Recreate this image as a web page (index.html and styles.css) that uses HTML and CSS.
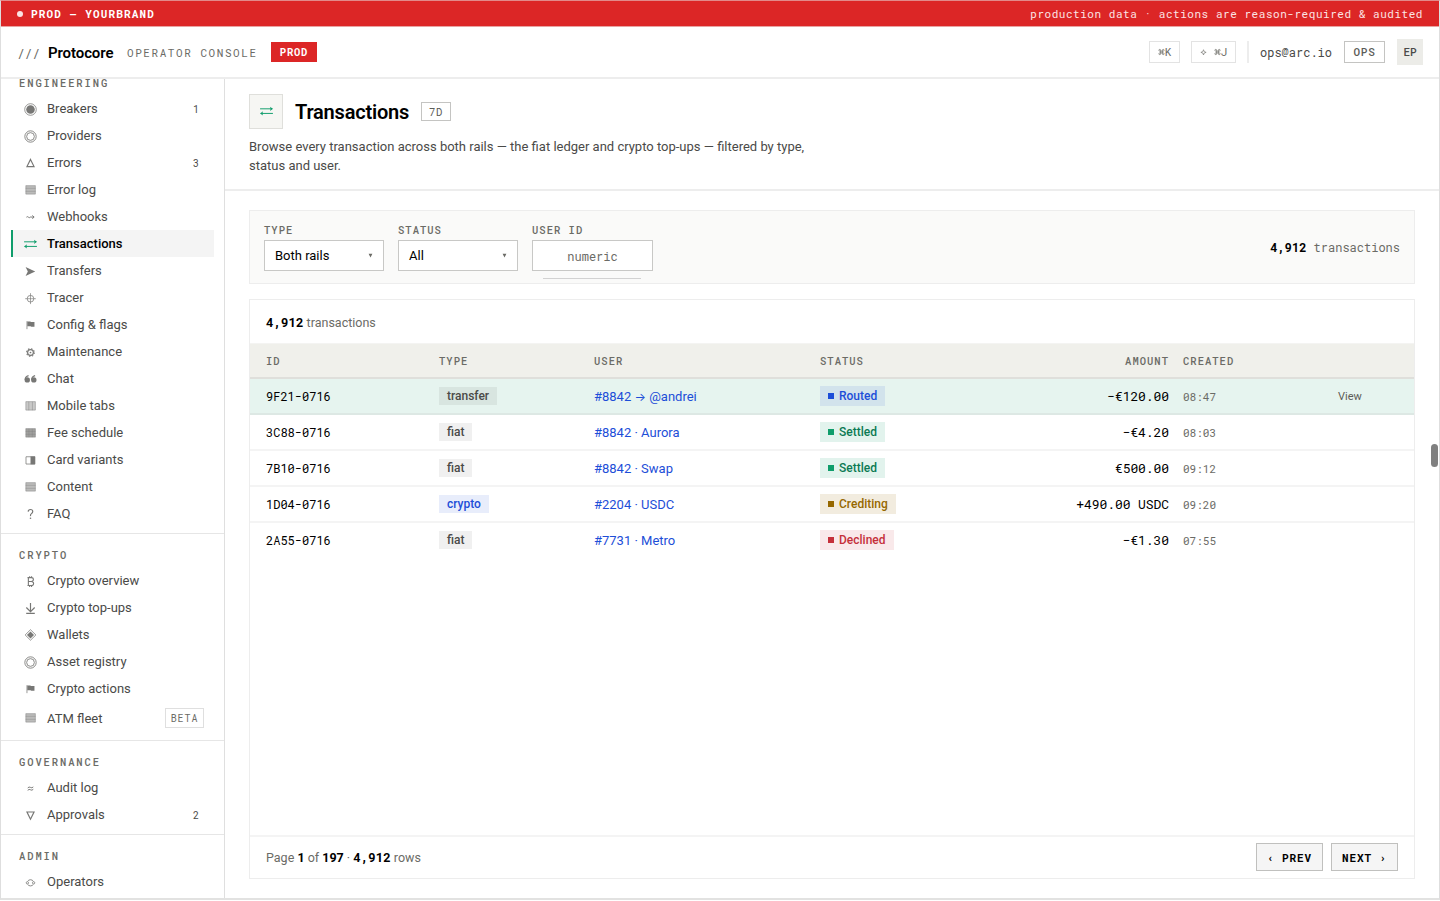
FILE: index.html
```html
<!DOCTYPE html>
<html lang="en">
<head>
<meta charset="utf-8">
<title>Protocore – Transactions</title>
<link rel="stylesheet" href="styles.css">
</head>
<body>
<svg class="sprite" aria-hidden="true">
  <symbol id="i-breakers" viewBox="0 0 14 14"><circle cx="7" cy="7" r="5.4" fill="none" stroke="currentColor" stroke-width=".7"/><circle cx="7" cy="7" r="4" fill="currentColor"/></symbol>
  <symbol id="i-ring" viewBox="0 0 14 14"><g fill="none" stroke="currentColor" stroke-width=".8"><circle cx="7" cy="7" r="5.3"/><circle cx="7" cy="7" r="3.6"/></g></symbol>
  <symbol id="i-up" viewBox="0 0 14 14"><path d="M7 3.2 10.3 9.9H3.7Z" fill="none" stroke="currentColor" stroke-width="1.1"/></symbol>
  <symbol id="i-down" viewBox="0 0 14 14"><path d="M7 10.4 3.7 3.7H10.3Z" fill="none" stroke="currentColor" stroke-width="1.1"/></symbol>
  <symbol id="i-rows" viewBox="0 0 14 14"><path d="M2.4 2.2h9.4v8.4H2.4Z" fill="currentColor" opacity=".5"/><path d="M2.7 2.5h8.8v7.8H2.7ZM2.4 5h9.4M2.4 7.8h9.4" fill="none" stroke="currentColor" stroke-width=".6" opacity=".5"/></symbol>
  <symbol id="i-cols" viewBox="0 0 14 14"><path d="M2.4 2.2h9.4v8.4H2.4Z" fill="currentColor" opacity=".4"/><path d="M2.7 2.5h8.8v7.8H2.7ZM5.4 2.5v8M8.8 2.5v8" fill="none" stroke="currentColor" stroke-width=".7" opacity=".5"/></symbol>
  <symbol id="i-grid" viewBox="0 0 14 14"><path d="M2.4 2.2h9.4v8.4H2.4Z" fill="currentColor" opacity=".7"/><path d="M2.7 2.5h8.8v7.8H2.7ZM5.5 2.5v8M8.7 2.5v8M2.4 5.1h9.4M2.4 7.8h9.4" fill="none" stroke="currentColor" stroke-width=".6" opacity=".4"/></symbol>
  <symbol id="i-half" viewBox="0 0 14 14"><path d="M2.8 3.5h8.2v6.8H2.8Z" fill="none" stroke="currentColor" stroke-width=".7"/><path d="M7 3.2h4.3v7.4H7Z" fill="currentColor"/></symbol>
  <symbol id="i-wave" viewBox="0 0 14 14"><path d="M3.2 6.7q.9-1 1.8 0t1.8-.1H10.2M8.7 5.1 10.4 6.6 8.7 8.1" fill="none" stroke="currentColor" stroke-width=".9"/></symbol>
  <symbol id="i-swap" viewBox="0 0 14 14"><path d="M1 4.5h11.4M1.6 8.8h11.4" fill="none" stroke="currentColor" stroke-width=".9"/><path d="M10.2 2.5 13 4.5 10.2 6.5l.7-2ZM3.8 6.8 1 8.8l2.8 2-.7-2Z" fill="currentColor"/></symbol>
  <symbol id="i-send" viewBox="0 0 14 14"><path d="M2.4 2.8 11.4 7 2.4 11.2 4.5 7Z" fill="currentColor"/></symbol>
  <symbol id="i-tracer" viewBox="0 0 14 14"><path d="M7 2v10.2M2 7.2h10" stroke="currentColor" stroke-width=".6"/><circle cx="7" cy="7.2" r="3.1" fill="none" stroke="currentColor" stroke-width=".7"/></symbol>
  <symbol id="i-flag" viewBox="0 0 14 14"><path d="M3.7 3v7.4" stroke="currentColor" stroke-width=".7"/><path d="M4 3.2h2.7l.8.6H10.7V8.2H7.8L7 7.6H4Z" fill="currentColor"/></symbol>
  <symbol id="i-gear" viewBox="0 0 14 14"><circle cx="7" cy="7" r="2.7" fill="none" stroke="currentColor" stroke-width="1.1"/><circle cx="7" cy="7" r="3.6" fill="none" stroke="currentColor" stroke-width="1" stroke-dasharray="1.3 1.53"/><circle cx="7" cy="7" r=".8" fill="currentColor"/></symbol>
  <symbol id="i-quote" viewBox="0 0 14 14"><circle cx="4" cy="7.4" r="2.5" fill="currentColor"/><circle cx="10.1" cy="7.4" r="2.5" fill="currentColor"/><path d="M2.1 7.4Q1.9 4.2 5.2 3.4M8.2 7.4Q8 4.2 11.3 3.4" fill="none" stroke="currentColor" stroke-width="1.1"/></symbol>
  <symbol id="i-help" viewBox="0 0 14 14"><path d="M4.8 4.3Q4.9 2.3 7 2.3t2.1 1.9q0 1.1-1.2 2T7 8.5" fill="none" stroke="currentColor" stroke-width="1.1"/><circle cx="7" cy="10.5" r=".75" fill="currentColor"/></symbol>
  <symbol id="i-btc" viewBox="0 0 14 14"><path d="M5 3.4v7.4M4.2 3.4h3.5q2 0 2 1.8t-2 1.8H5M7.7 7q2.2 0 2.2 1.9t-2.2 1.9H4.2M6.2 2v1.4M8 2v1.4M6.2 10.8v1.4M8 10.8v1.4" fill="none" stroke="currentColor" stroke-width="1"/></symbol>
  <symbol id="i-in" viewBox="0 0 14 14"><path d="M7 1.8v8M3.1 6.1 7 9.9l3.9-3.8M3 11.6h8" fill="none" stroke="currentColor" stroke-width="1.1"/></symbol>
  <symbol id="i-diamond" viewBox="0 0 14 14"><path d="M7 1.6 12 6.5 7 11.4 2 6.5Z" fill="none" stroke="currentColor" stroke-width=".7"/><path d="M7 3.2 10.3 6.5 7 9.8 3.7 6.5Z" fill="currentColor"/></symbol>
  <symbol id="i-approx" viewBox="0 0 14 14"><path d="M4.4 6.5q1.3-1.5 2.6-.5t2.6-.5M4.4 8.7q1.3-1.5 2.6-.5t2.6-.5" fill="none" stroke="currentColor" stroke-width=".9"/></symbol>
  <symbol id="i-people" viewBox="0 0 14 14"><path d="M4.3 5.9A3.2 3.2 0 0 1 9.7 5.9M4.3 8.7A3.2 3.2 0 0 0 9.7 8.7" fill="none" stroke="currentColor" stroke-width=".8"/><g fill="none" stroke="currentColor" stroke-width=".7"><circle cx="4.1" cy="7.3" r="1.1"/><circle cx="9.9" cy="7.3" r="1.1"/></g></symbol>
  <symbol id="i-cmd" viewBox="0 0 8 8"><path d="M3 3V2A1 1 0 1 0 2 3H6A1 1 0 1 0 5 2V6A1 1 0 1 0 6 5H2A1 1 0 1 0 3 6Z" fill="none" stroke="currentColor" stroke-width=".8"/></symbol>
</svg>

<div class="window">
  <div class="banner">
    <span class="banner-env"><i class="dot"></i>PROD — YOURBRAND</span>
    <span class="banner-note">production data · actions are reason-required &amp; audited</span>
  </div>

  <header class="topbar">
    <span class="slashes">///</span>
    <span class="brand">Protocore</span>
    <span class="console">OPERATOR CONSOLE</span>
    <span class="env">PROD</span>
    <div class="tools">
      <span class="key"><svg class="cmd"><use href="#i-cmd"/></svg>K</span>
      <span class="key key-ai"><svg class="spark" viewBox="0 0 8 8"><path d="M4 1.4 4.8 3.6 7 4.4 4.8 5.2 4 7.4 3.2 5.2 1 4.4 3.2 3.6Z" fill="none" stroke="currentColor" stroke-width=".7"/></svg><svg class="cmd"><use href="#i-cmd"/></svg>J</span>
      <span class="sep"></span>
      <span class="email">ops@arc.io</span>
      <span class="role">OPS</span>
      <span class="avatar">EP</span>
    </div>
  </header>

  <div class="body">
    <nav class="sidebar">
      <section class="group">
        <h2>ENGINEERING</h2>
        <a class="item"><svg><use href="#i-breakers"/></svg>Breakers<b>1</b></a>
        <a class="item"><svg><use href="#i-ring"/></svg>Providers</a>
        <a class="item"><svg><use href="#i-up"/></svg>Errors<b>3</b></a>
        <a class="item"><svg><use href="#i-rows"/></svg>Error log</a>
        <a class="item"><svg><use href="#i-wave"/></svg>Webhooks</a>
        <a class="item active"><svg><use href="#i-swap"/></svg>Transactions</a>
        <a class="item"><svg><use href="#i-send"/></svg>Transfers</a>
        <a class="item"><svg><use href="#i-tracer"/></svg>Tracer</a>
        <a class="item"><svg><use href="#i-flag"/></svg>Config &amp; flags</a>
        <a class="item"><svg><use href="#i-gear"/></svg>Maintenance</a>
        <a class="item"><svg><use href="#i-quote"/></svg>Chat</a>
        <a class="item"><svg><use href="#i-cols"/></svg>Mobile tabs</a>
        <a class="item"><svg><use href="#i-grid"/></svg>Fee schedule</a>
        <a class="item"><svg><use href="#i-half"/></svg>Card variants</a>
        <a class="item"><svg><use href="#i-rows"/></svg>Content</a>
        <a class="item"><svg><use href="#i-help"/></svg>FAQ</a>
      </section>
      <section class="group">
        <h2>CRYPTO</h2>
        <a class="item"><svg><use href="#i-btc"/></svg>Crypto overview</a>
        <a class="item"><svg><use href="#i-in"/></svg>Crypto top-ups</a>
        <a class="item"><svg><use href="#i-diamond"/></svg>Wallets</a>
        <a class="item"><svg><use href="#i-ring"/></svg>Asset registry</a>
        <a class="item"><svg><use href="#i-flag"/></svg>Crypto actions</a>
        <a class="item tall"><svg><use href="#i-rows"/></svg><span>ATM fleet</span><em>BETA</em></a>
      </section>
      <section class="group">
        <h2>GOVERNANCE</h2>
        <a class="item"><svg><use href="#i-approx"/></svg>Audit log</a>
        <a class="item"><svg><use href="#i-down"/></svg>Approvals<b>2</b></a>
      </section>
      <section class="group">
        <h2>ADMIN</h2>
        <a class="item"><svg><use href="#i-people"/></svg>Operators</a>
      </section>
    </nav>

    <main class="main">
      <div class="hero">
        <div class="hero-row">
          <span class="hero-icon"><svg><use href="#i-swap"/></svg></span>
          <h1>Transactions</h1>
          <span class="range">7D</span>
        </div>
        <p>Browse every transaction across both rails — the fiat ledger and crypto top-ups — filtered by type, status and user.</p>
      </div>

      <div class="filters">
        <div class="field"><label>TYPE</label><div class="control">Both rails<svg viewBox="0 0 5 5"><path d="M.6.8h3.8L2.5 4.6Z"/></svg></div></div>
        <div class="field"><label>STATUS</label><div class="control">All<svg viewBox="0 0 5 5"><path d="M.6.8h3.8L2.5 4.6Z"/></svg></div></div>
        <div class="field"><label>USER ID</label><div class="control numeric">numeric</div><i class="underline"></i></div>
        <div class="count"><strong>4,912</strong> transactions</div>
      </div>

      <div class="card">
        <div class="card-head"><strong>4,912</strong> transactions</div>
        <div class="tr th"><span>ID</span><span>TYPE</span><span>USER</span><span>STATUS</span><span class="r">AMOUNT</span><span class="created">CREATED</span><span></span></div>
        <div class="tr sel"><span class="id">9F21-0716</span><span class="cell"><i class="tag">transfer</i></span><span class="user">#8842 <i class="arrow">→</i> @andrei</span><span class="cell"><i class="status routed">Routed</i></span><span class="amt">−€120.00</span><span class="time">08:47</span><span class="view">View</span></div>
        <div class="tr"><span class="id">3C88-0716</span><span class="cell"><i class="tag">fiat</i></span><span class="user">#8842 · Aurora</span><span class="cell"><i class="status settled">Settled</i></span><span class="amt">−€4.20</span><span class="time">08:03</span><span></span></div>
        <div class="tr"><span class="id">7B10-0716</span><span class="cell"><i class="tag">fiat</i></span><span class="user">#8842 · Swap</span><span class="cell"><i class="status settled">Settled</i></span><span class="amt">€500.00</span><span class="time">09:12</span><span></span></div>
        <div class="tr"><span class="id">1D04-0716</span><span class="cell"><i class="tag crypto">crypto</i></span><span class="user">#2204 · USDC</span><span class="cell"><i class="status crediting">Crediting</i></span><span class="amt">+490.00 USDC</span><span class="time">09:20</span><span></span></div>
        <div class="tr last"><span class="id">2A55-0716</span><span class="cell"><i class="tag">fiat</i></span><span class="user">#7731 · Metro</span><span class="cell"><i class="status declined">Declined</i></span><span class="amt">−€1.30</span><span class="time">07:55</span><span></span></div>
        <div class="card-foot">
          <div>Page <strong class="sans">1</strong> of <strong class="sans">197</strong> · <strong>4,912</strong> rows</div>
          <div class="pager"><span class="btn">‹ PREV</span><span class="btn">NEXT ›</span></div>
        </div>
      </div>
    </main>
  </div>
  <i class="thumb"></i>
</div>
</body>
</html>
```
FILE: styles.css
```css
* { box-sizing: border-box; }
:root { --mono: "Roboto Mono", "DejaVu Sans Mono", monospace; }
body {
  margin: 0; height: 901px; overflow: hidden; background: #fff;
  font: 13px/19px Roboto, sans-serif; color: #4a4a48;
}
i, em { font-style: normal; }
.sprite { position: absolute; width: 0; height: 0; }
.window {
  position: relative; height: 900px; display: flex; flex-direction: column;
  border: 1px solid #dedede; border-top-color: #e28a8a; border-bottom: 2px solid #e2e2e1;
}

.banner {
  height: 26px; flex: none; display: flex; align-items: center; justify-content: space-between;
  padding: 1px 16px 0 16px; background: #dc2626; color: #fff; border-bottom: 1px solid #e9a3a1;
  font: 11px/16px var(--mono);
}
.banner-env { display: flex; align-items: center; font-weight: 700; letter-spacing: 1.15px; }
.dot { width: 6px; height: 6px; margin-right: 8px; border-radius: 50%; background: #fbe3e3; }
.banner-note { letter-spacing: .54px; color: #fbe4e4; }

.topbar {
  height: 52px; flex: none; display: flex; align-items: center;
  padding: 0 16px 0 16px; border-bottom: 2px solid #ededed;
}
.slashes { font: 13px/16px var(--mono); color: #6b6b66; width: 31px; letter-spacing: -.2px; padding-top: 2px; }
.brand { width: 79px; font-size: 15px; font-weight: 600; letter-spacing: -.1px; color: #000; padding-top: 2px; }
.console { width: 144px; font: 11px/16px var(--mono); letter-spacing: 1.56px; color: #6b6b66; white-space: nowrap; padding-top: 1px; }
.env { width: 46px; height: 20px; text-align: center; background: #dc2626; color: #fff; font: 700 10.5px/20px var(--mono); letter-spacing: .8px; }
.tools { margin-left: auto; display: flex; align-items: center; }
.key {
  width: 31px; height: 22px; margin-right: 11px; display: flex; align-items: center; justify-content: center;
  border: 1px solid #e3e3e3; color: #6b6b66; font: 11px/18px var(--mono);
}
.key-ai { width: 45px; margin-right: 11px; }
.cmd { width: 7px; height: 8px; }
.spark { width: 7px; height: 8px; margin-right: 7px; }
.sep { width: 2px; height: 22px; background: #ededed; margin-right: 11px; }
.email { width: 84px; font: 12px/16px var(--mono); }
.role { width: 41px; height: 22px; margin-right: 12px; border: 1px solid #c4c4c2; text-align: center; font: 500 11px/20px var(--mono); letter-spacing: .8px; color: #5c5c58; }
.avatar { width: 26px; height: 26px; background: #ecece8; text-align: center; font: 500 11px/26px var(--mono); }

.body { flex: 1; min-height: 0; display: flex; }
.sidebar { width: 224px; flex: none; overflow: hidden; border-right: 1px solid #dfdfdf; }
.group { border-top: 1px solid #e6e6e6; padding: 14px 10px 6px; }
.group:first-child { border-top: 0; padding-top: 0; margin-top: -3px; }
.group h2 { margin: 0 0 4px 8px; font: 500 10.5px/15px var(--mono); letter-spacing: 1.89px; color: #6b6b66; }
.item { height: 27px; display: flex; align-items: center; padding: 0 10px 0 10px; border-left: 2px solid transparent; }
.item.tall { height: 32px; }
.item.tall span { padding-top: 1px; }
.item svg { width: 15px; height: 15px; margin: 1px 9px 0 0; color: #777775; }
.item b { margin-left: auto; margin-right: 5px; padding-top: 1px; font: 10px/15px var(--mono); }
.item em { margin-left: auto; width: 39px; height: 20px; border: 1px solid #dfdfdf; text-align: center; font: 10px/19px var(--mono); letter-spacing: .9px; color: #6b6b66; }
.item.active { background: #f4f4f4; border-left-color: #0f9d6b; color: #000; font-weight: 500; }
.item.active svg { color: #0f9d6b; }

.main { flex: 1; min-width: 0; display: flex; flex-direction: column; }
.hero { height: 112px; flex: none; padding: 15px 24px 0; border-bottom: 2px solid #ededed; }
.hero-row { display: flex; align-items: center; height: 35px; }
.hero-icon { width: 34px; height: 35px; margin-right: 12px; display: flex; align-items: center; justify-content: center; background: #f6f6f3; border: 1px solid #dfdfdb; color: #0f9d6b; }
.hero-icon svg { width: 15px; height: 15px; }
h1 { margin: 0; width: 126px; font-size: 20px; line-height: 28px; font-weight: 600; letter-spacing: -.2px; color: #000; }
.range { width: 30px; height: 19px; border: 1px solid #c4c4c2; text-align: center; font: 10.5px/18px var(--mono); letter-spacing: .8px; color: #5c5c58; }
.hero p { margin: 8px 0 0; width: 570px; }

.filters {
  height: 74px; flex: none; margin: 19px 24px 0; padding: 12px 14px; display: flex;
  background: #fafaf9; border: 1px solid #ededed;
}
.field { width: 120px; margin-right: 14px; }
.field label { display: block; font: 500 10.5px/15px var(--mono); letter-spacing: 1.02px; color: #6b6b66; margin-bottom: 2px; }
.control {
  height: 31px; display: flex; align-items: center; justify-content: space-between; padding: 0 10px;
  background: #fff; border: 1px solid #c8c8c6; color: #000;
}
.control svg { width: 5px; height: 5px; fill: #6b6b66; }
.control.numeric { width: 121px; justify-content: center; font: 12px/16px var(--mono); color: #6b6b66; }
.underline { display: block; height: 1px; width: 98px; margin: 7px 0 0 11px; background: #d2d2d2; }
.count { margin: 16px 0 0 auto; font: 12px/16px var(--mono); color: #6b6b66; }
.count strong, .card strong { color: #000; font-weight: 700; }

.card { height: 580px; flex: none; margin: 15px 24px 0; display: flex; flex-direction: column; border: 1px solid #ededed; }
.card-head { height: 43px; flex: none; padding: 13px 16px 0; font-size: 12.5px; line-height: 18px; color: #6b6b66; }
.card strong { font-family: var(--mono); }
.card strong.sans { font-family: Roboto, sans-serif; }
.tr {
  height: 36px; flex: none; display: grid; align-items: center; padding-left: 16px;
  grid-template-columns: 173px 155px 226px 149px 200px 169px 1fr;
  border-bottom: 2px solid #f4f4f4; white-space: nowrap;
}
.th { height: 36px; background: #f0f0eb; border-top: 1px solid #f4f4f2; border-bottom-color: #dfdfdb; font: 500 10.5px/15px var(--mono); letter-spacing: 1.02px; color: #6b6b66; }
.th span { padding-top: 2px; }
.r, .amt { text-align: right; }
.sel { background: #e6f4ef; border-bottom-color: #dde8e4; }
.last { border-bottom-color: transparent; }
.id { font: 12px/16px var(--mono); color: #000; }
.user { color: #1d4ed8; }
.arrow { font: 12px/16px Inter, sans-serif; }
.amt { font: 13px/18px var(--mono); letter-spacing: -.08px; color: #000; }
.time, .created { padding-left: 14px; }
.time { font: 11px/16px var(--mono); color: #6b6b66; padding-top: 1px; }
.view { font-size: 11px; line-height: 16px; color: #5c5c58; padding-top: 1px; }
.cell { display: flex; align-items: center; height: 20px; }
.tag { height: 18px; padding: 0 8px; font-size: 12px; font-weight: 500; line-height: 18px; background: rgba(0,0,0,.06); color: #4a4a48; }
.tag.crypto { background: #e8edfb; color: #1d4ed8; }
.status { display: flex; align-items: center; height: 20px; padding: 0 8px; font-size: 12px; font-weight: 500; line-height: 20px; }
.status::before { content: ""; width: 6px; height: 6px; margin-right: 5px; background: currentColor; }
.routed { background: #d2e3ec; color: #1d4ed8; }
.settled { background: #e2f3ed; color: #0b7a53; }
.settled::before { background: #0f9d6b; }
.crediting { background: #f2ecdf; color: #966800; }
.declined { background: #f9e9ea; color: #c5303a; }

.card-foot {
  margin-top: auto; height: 43px; flex: none; display: flex; align-items: center; justify-content: space-between;
  padding: 0 16px; border-top: 2px solid #f4f4f4; font-size: 12.5px; color: #6b6b66;
}
.pager { display: flex; gap: 8px; padding-bottom: 2px; }
.btn { width: 67px; height: 28px; border: 1px solid #c0c0be; background: #f5f5f5; color: #000; text-align: center; font: 700 11px/28px var(--mono); letter-spacing: .88px; white-space: pre; }
.thumb { position: absolute; right: 1px; top: 443px; width: 7px; height: 23px; border-radius: 4px; background: #808080; }
```
